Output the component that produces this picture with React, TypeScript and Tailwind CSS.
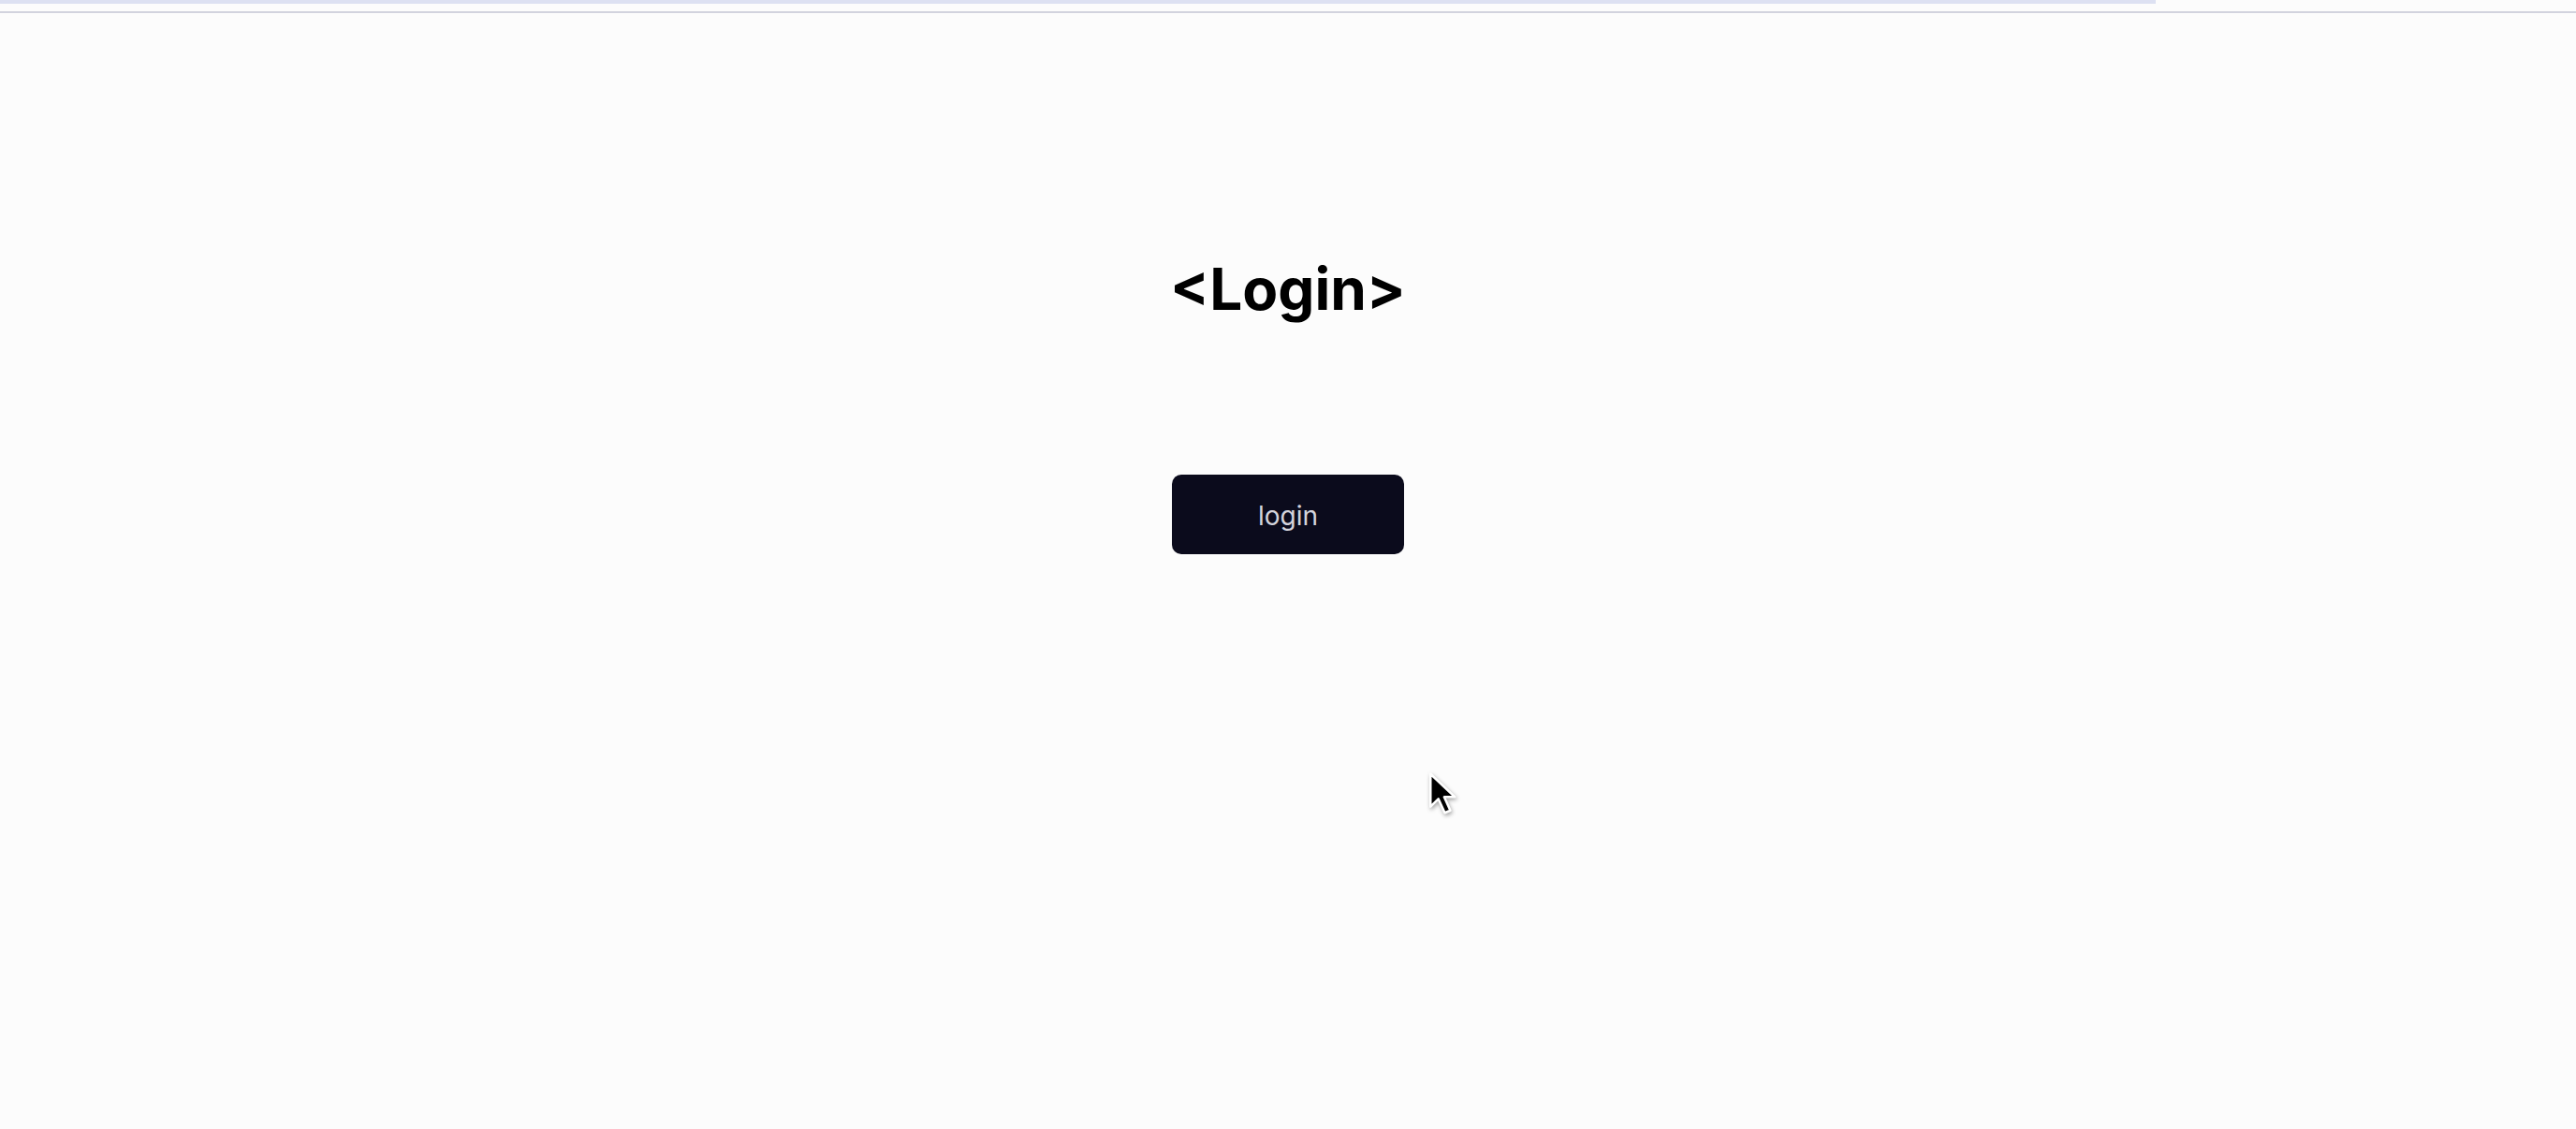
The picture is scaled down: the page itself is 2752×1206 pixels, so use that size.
export default function App() {
  return (
    <div className="relative min-h-screen bg-[#fcfcfc] font-['Inter','Noto_Sans',sans-serif] overflow-hidden">
      {/* browser top strip */}
      <div className="h-[4px] w-[2303px] bg-[#dde1f2]" />
      <div className="mt-[8px] h-[2px] w-full bg-[#d2d3de]" />

      <main className="flex flex-col items-center pt-[256px]">
        <h1 className="text-[62px] font-bold leading-[77px] text-black">&lt;Login&gt;</h1>
        <button
          type="button"
          className="mt-[160px] flex h-[85px] w-[248px] items-center justify-center rounded-[10px] bg-[#0b0b1c] pt-[3px] text-[28px] text-[#d4d4dc]"
        >
          login
        </button>
      </main>

      {/* mouse pointer */}
      <svg
        className="absolute left-[1524px] top-[822px]"
        width="36"
        height="54"
        viewBox="0 0 17 25"
        style={{ filter: "drop-shadow(1px 2px 2px rgba(0,0,0,0.35))" }}
      >
        <path
          d="M2 2 L2 18.5 L6 14.6 L9.2 21.6 L12 20.4 L8.9 13.6 L14.3 13.6 Z"
          fill="#000"
          stroke="#fff"
          strokeWidth="1.2"
          strokeLinejoin="round"
        />
      </svg>
    </div>
  );
}
